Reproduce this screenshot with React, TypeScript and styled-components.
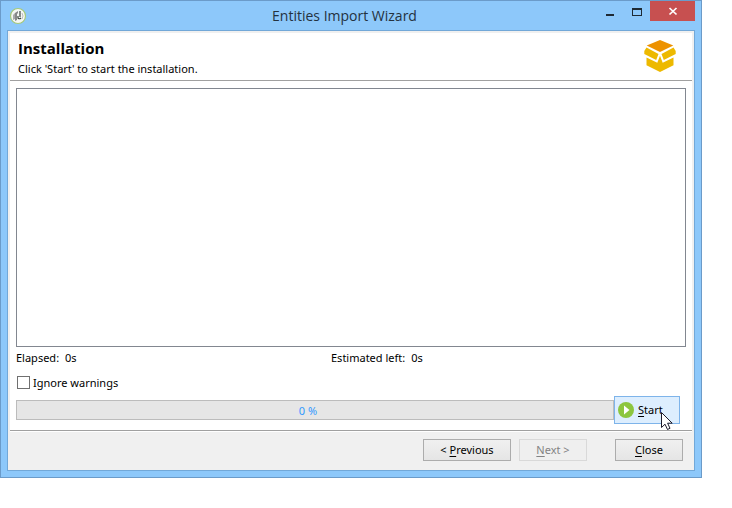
import React, { useState } from "react";
import styled, { createGlobalStyle } from "styled-components";

const GlobalStyle = createGlobalStyle`
  *, *::before, *::after { box-sizing: border-box; }
  body {
    margin: 0;
    background: #fff;
    color: #000;
    font: 11px/16px "Noto Sans", "Open Sans", sans-serif;
  }
  button, input, textarea { font: inherit; color: inherit; margin: 0; }
`;

const Window = styled.section`
  margin-right: 30px;
  padding: 0 7px 7px;
  border: 1px solid #6b9bc9;
  background: #8dc8fa;
`;

const TitleBar = styled.header`
  display: grid;
  grid-template-columns: 1fr auto 1fr;
  align-items: center;
  height: 29px;
  margin-right: -1px;
`;

const Title = styled.h1`
  margin: 0;
  padding-right: 14px;
  color: #24323f;
  font-family: "Open Sans", sans-serif;
  font-size: 14px;
  line-height: 28px;
  font-weight: 400;
`;

const AppIcon = styled.svg`
  display: block;
  width: 18px;
  height: 18px;
  margin-left: 1px;
`;

const Caption = styled.div`
  display: flex;
  justify-content: flex-end;
  align-self: start;
`;

const CaptionButton = styled.button<{ $close?: boolean }>`
  display: flex;
  align-items: center;
  justify-content: center;
  width: ${(p) => (p.$close ? "45px" : "27px")};
  height: 20px;
  padding: 0;
  border: 0;
  background: ${(p) => (p.$close ? "#c75050" : "transparent")};
`;

const Client = styled.div`
  padding: 2px;
  border: 1px solid #72a8d8;
  background: #f0f0f0;
  margin: 0 -1px -1px;
`;

const Banner = styled.div`
  display: flex;
  justify-content: space-between;
  align-items: flex-start;
  padding: 5px 16px 3px 8px;
  border-bottom: 1px solid #a0a0a0;
  background: #fff;
`;

const Heading = styled.h2`
  margin: 0;
  font-family: "Open Sans", sans-serif;
  font-size: 15px;
  line-height: 20px;
  font-weight: 700;
`;

const Description = styled.p`
  margin: 0;
  padding-top: 3px;
`;

const Logo = styled.svg`
  display: block;
  width: 32px;
  height: 32px;
  margin-top: 2px;
`;

const Body = styled.main`
  padding: 7px 6px 6px;
  border-bottom: 1px solid #a0a0a0;
  background: #fff;
`;

const Log = styled.textarea`
  display: block;
  width: 100%;
  height: 259px;
  padding: 4px;
  border: 1px solid #828790;
  background: #fff;
  resize: none;
  outline: 0;
`;

const Times = styled.div`
  display: grid;
  grid-template-columns: 315px 1fr;
  align-items: center;
  height: 22px;
`;

const Time = styled.div`
  display: flex;
  gap: 6px;
`;

const Option = styled.label`
  display: flex;
  align-items: center;
  gap: 3px;
  width: fit-content;
  height: 27px;
  padding-left: 1px;
`;

const CheckBox = styled.input`
  appearance: none;
  width: 13px;
  height: 13px;
  border: 1px solid #707070;
  background: #fff;
  &:checked { background: #3399ff; box-shadow: inset 0 0 0 2px #fff; }
`;

const RunRow = styled.div`
  display: flex;
  align-items: center;
  padding-right: 6px;
`;

const Progress = styled.div`
  flex: 1;
  height: 20px;
  padding-right: 14px;
  border: 1px solid #bcbcbc;
  background: #e6e6e6;
  color: #3399ff;
  line-height: 19px;
  text-align: center;
`;

const StartButton = styled.button`
  position: relative;
  display: flex;
  align-items: center;
  gap: 4px;
  width: 66px;
  height: 28px;
  padding: 0 3px;
  border: 1px solid #7eb4ea;
  background: #ddeefe;
`;

const Pointer = styled.svg`
  position: absolute;
  left: 45px;
  top: 14px;
  width: 14px;
  height: 21px;
  pointer-events: none;
`;

const Footer = styled.footer`
  display: flex;
  justify-content: flex-end;
  gap: 8px;
  padding: 7px 9px 7px;
  border-top: 1px solid #fff;
`;

const PushButton = styled.button<{ $wide?: boolean; $apart?: boolean }>`
  width: ${(p) => (p.$wide ? "88px" : "68px")};
  height: 22px;
  margin-left: ${(p) => (p.$apart ? "20px" : "0")};
  padding: 0;
  border: 1px solid #acacac;
  background: linear-gradient(#f0f0f0, #e5e5e5);
  line-height: 20px;
  &:disabled {
    border-color: #d9d9d9;
    background: #efefef;
    color: #838383;
  }
`;

const Key = styled.u`
  text-underline-offset: 2px;
  text-decoration-skip-ink: none;
`;

export default function App() {
  const [ignore, setIgnore] = useState(false);
  return (
    <>
      <GlobalStyle />
      <Window aria-label="Entities Import Wizard">
        <TitleBar>
          <AppIcon viewBox="0 0 18 18" aria-hidden="true">
            <circle cx="9" cy="9" r="7.5" fill="#f5f7f4" stroke="#a5c979" strokeWidth="1.2" />
            <path d="M4 8l2-2v6l-2 1z" fill="#aaa" />
            <path d="M6 6l3-2v2l-1 1v6l-2 1z" fill="#888" />
            <path d="M11 4v6M9 9v2c0 1 2 1 3 0" fill="none" stroke="#3b433d" strokeWidth="1.2" />
            <path d="M13 6l1 3-1 3" fill="none" stroke="#bbb" />
          </AppIcon>
          <Title>Entities Import Wizard</Title>
          <Caption>
            <CaptionButton aria-label="Minimize">
              <svg width="10" height="10" viewBox="0 0 10 10">
                <path d="M1 8h8v2H1z" fill="#1e2a34" />
              </svg>
            </CaptionButton>
            <CaptionButton aria-label="Maximize">
              <svg width="10" height="10" viewBox="0 0 10 10">
                <path fillRule="evenodd" d="M0 2h10v8H0zM1 4v5h8V4z" fill="#1e2a34" />
              </svg>
            </CaptionButton>
            <CaptionButton $close aria-label="Close window">
              <svg width="10" height="10" viewBox="0 0 10 10">
                <path d="M1.500 2l7 6.500M8.500 2l-7 6.500" stroke="#fff" strokeWidth="1.700" />
              </svg>
            </CaptionButton>
          </Caption>
        </TitleBar>
        <Client>
          <Banner>
            <div>
              <Heading>Installation</Heading>
              <Description>Click 'Start' to start the installation.</Description>
            </div>
            <Logo viewBox="0 0 32 32" aria-hidden="true">
              <path d="M16 0l13.300 5.500L16 12 2.700 5.500z" fill="#ed9200" />
              <path d="M2.500 7.500L14.500 14l-2.300 6L.3 14V11zM29.500 7.500L17.500 14l2.300 6 11.900-6V11z" fill="#edb900" />
              <path d="M2.500 17.500l10.800 5.300 2.700-7 2.700 7 10.800-5.300v7.800L16 32 2.500 25.300z" fill="#edb900" />
            </Logo>
          </Banner>
          <Body>
            <Log readOnly aria-label="Installation log" />
            <Times>
              <Time><span>Elapsed:</span><span>0s</span></Time>
              <Time><span>Estimated left:</span><span>0s</span></Time>
            </Times>
            <Option>
              <CheckBox type="checkbox" checked={ignore} onChange={(e) => setIgnore(e.target.checked)} />
              Ignore warnings
            </Option>
            <RunRow>
              <Progress role="progressbar" aria-label="Installation progress" aria-valuenow={0}>0 %</Progress>
              <StartButton>
                <svg width="16" height="16" viewBox="0 0 16 16" aria-hidden="true">
                  <circle cx="8" cy="8" r="8" fill="#8cc63f" />
                  <path d="M6 3.500L11.500 8 6 12.500z" fill="#fff" />
                </svg>
                <span><Key>S</Key>tart</span>
                <Pointer viewBox="0 0 14 21" aria-hidden="true">
                  <path d="M1.500 1.500v15l3.500-3.300 2.500 5.300 2.500-1.200-2.400-5.100h4.600z" fill="#fff" stroke="#1b1b2b" />
                </Pointer>
              </StartButton>
            </RunRow>
          </Body>
          <Footer>
            <PushButton $wide>&lt; <Key>P</Key>revious</PushButton>
            <PushButton disabled><Key>N</Key>ext &gt;</PushButton>
            <PushButton $apart><Key>C</Key>lose</PushButton>
          </Footer>
        </Client>
      </Window>
    </>
  );
}
